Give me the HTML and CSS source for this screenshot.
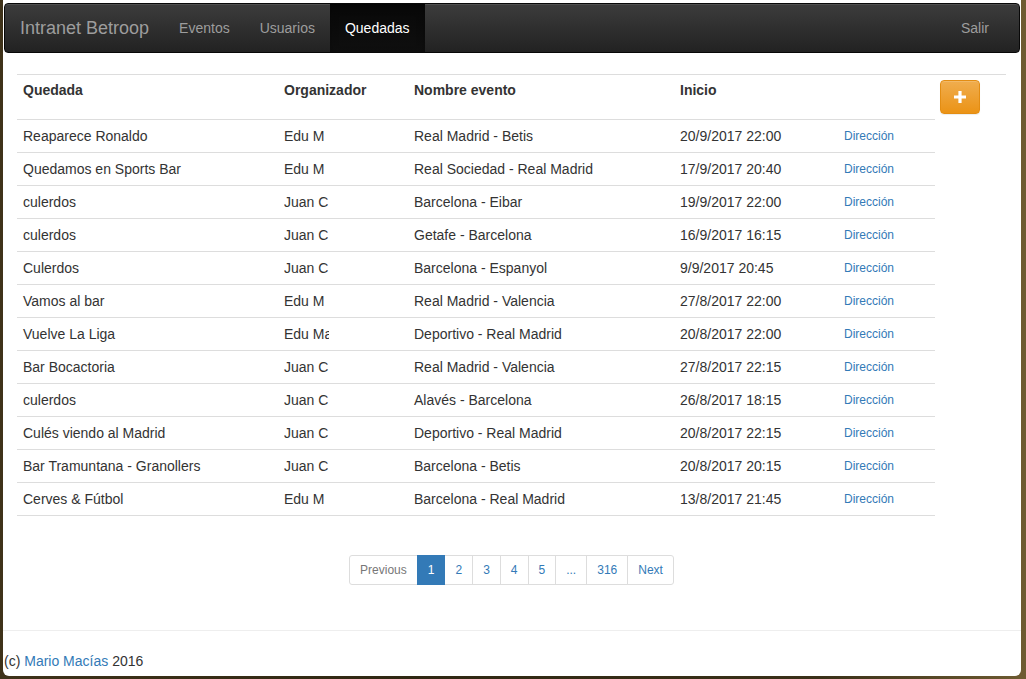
FILE: index.html
```html
<!DOCTYPE html>
<html lang="es">
<head>
<meta charset="utf-8">
<title>Intranet Betroop</title>
<link rel="stylesheet" href="styles.css">
</head>
<body>
<div class="window">
  <nav class="navbar">
    <a class="brand" href="#">Intranet Betroop</a>
    <ul class="nav">
      <li><a href="#">Eventos</a></li>
      <li><a href="#">Usuarios</a></li>
      <li class="active"><a href="#">Quedadas</a></li>
    </ul>
    <ul class="nav nav-right">
      <li><a href="#">Salir</a></li>
    </ul>
  </nav>

  <main class="container">
    <table class="table">
      <colgroup>
        <col class="c1"><col class="c2"><col class="c3"><col class="c4"><col class="c5"><col class="c6">
      </colgroup>
      <thead>
        <tr>
          <th>Quedada</th>
          <th>Organizador</th>
          <th>Nombre evento</th>
          <th>Inicio</th>
          <th></th>
          <th class="action">
            <button class="btn-add" type="button" aria-label="Añadir">
              <svg width="14" height="14" viewBox="0 0 14 14"><path d="M5.4 1h3.2v4.4H13v3.2H8.6V13H5.4V8.6H1V5.4h4.4z" fill="#fff"/></svg>
            </button>
          </th>
        </tr>
      </thead>
      <tbody>
        <tr><td>Reaparece Ronaldo</td><td><span class="clip">Edu M</span></td><td>Real Madrid - Betis</td><td>20/9/2017 22:00</td><td><a class="link" href="#">Dirección</a></td><td class="empty"></td></tr>
        <tr><td>Quedamos en Sports Bar</td><td><span class="clip">Edu M</span></td><td>Real Sociedad - Real Madrid</td><td>17/9/2017 20:40</td><td><a class="link" href="#">Dirección</a></td><td class="empty"></td></tr>
        <tr><td>culerdos</td><td><span class="clip">Juan C</span></td><td>Barcelona - Eibar</td><td>19/9/2017 22:00</td><td><a class="link" href="#">Dirección</a></td><td class="empty"></td></tr>
        <tr><td>culerdos</td><td><span class="clip">Juan C</span></td><td>Getafe - Barcelona</td><td>16/9/2017 16:15</td><td><a class="link" href="#">Dirección</a></td><td class="empty"></td></tr>
        <tr><td>Culerdos</td><td><span class="clip">Juan C</span></td><td>Barcelona - Espanyol</td><td>9/9/2017 20:45</td><td><a class="link" href="#">Dirección</a></td><td class="empty"></td></tr>
        <tr><td>Vamos al bar</td><td><span class="clip">Edu M</span></td><td>Real Madrid - Valencia</td><td>27/8/2017 22:00</td><td><a class="link" href="#">Dirección</a></td><td class="empty"></td></tr>
        <tr><td>Vuelve La Liga</td><td><span class="clip">Edu Macías</span></td><td>Deportivo - Real Madrid</td><td>20/8/2017 22:00</td><td><a class="link" href="#">Dirección</a></td><td class="empty"></td></tr>
        <tr><td>Bar Bocactoria</td><td><span class="clip">Juan C</span></td><td>Real Madrid - Valencia</td><td>27/8/2017 22:15</td><td><a class="link" href="#">Dirección</a></td><td class="empty"></td></tr>
        <tr><td>culerdos</td><td><span class="clip">Juan C</span></td><td>Alavés - Barcelona</td><td>26/8/2017 18:15</td><td><a class="link" href="#">Dirección</a></td><td class="empty"></td></tr>
        <tr><td>Culés viendo al Madrid</td><td><span class="clip">Juan C</span></td><td>Deportivo - Real Madrid</td><td>20/8/2017 22:15</td><td><a class="link" href="#">Dirección</a></td><td class="empty"></td></tr>
        <tr><td>Bar Tramuntana - Granollers</td><td><span class="clip">Juan C</span></td><td>Barcelona - Betis</td><td>20/8/2017 20:15</td><td><a class="link" href="#">Dirección</a></td><td class="empty"></td></tr>
        <tr><td>Cerves &amp; Fútbol</td><td><span class="clip">Edu M</span></td><td>Barcelona - Real Madrid</td><td>13/8/2017 21:45</td><td><a class="link" href="#">Dirección</a></td><td class="empty"></td></tr>
      </tbody>
    </table>

    <div class="pager-wrap">
      <ul class="pagination">
        <li class="disabled"><span>Previous</span></li>
        <li class="active"><span>1</span></li>
        <li><a href="#">2</a></li>
        <li><a href="#">3</a></li>
        <li><a href="#">4</a></li>
        <li><a href="#">5</a></li>
        <li><a href="#">...</a></li>
        <li><a href="#">316</a></li>
        <li><a href="#">Next</a></li>
      </ul>
    </div>
  </main>

  <footer class="footer">
    <hr class="rule">
    <p class="copy">(c) <a href="#">Mario Macías</a> 2016</p>
  </footer>
</div>
</body>
</html>
```

FILE: styles.css
```css
* { box-sizing: border-box; }

html, body {
  margin: 0;
  padding: 0;
}

body {
  width: 1026px;
  height: 679px;
  overflow: hidden;
  background: linear-gradient(90deg, #3f3219 0%, #2f2712 40%, #3a3018 80%, #6e5b31 100%);
  font-family: "Liberation Sans", Arial, Helvetica, sans-serif;
  font-size: 14px;
  line-height: 20px;
  color: #333;
}

a { text-decoration: none; }

.window {
  margin-left: 3px;
  width: 1018px;
  height: 676px;
  background: #fff;
  border-radius: 0 0 6px 6px;
  padding-top: 3px;
  display: flex;
  flex-direction: column;
}

/* Navbar */
.navbar {
  margin: 0 1px;
  height: 50px;
  flex: none;
  display: flex;
  align-items: stretch;
  background: linear-gradient(to bottom, #3c3c3c 0%, #222 100%);
  border: 1px solid #080808;
  border-radius: 4px;
  padding-right: 15px;
  box-shadow: inset 0 1px 0 rgba(255,255,255,.1);
}

.brand {
  padding: 0 15px;
  font-size: 18px;
  line-height: 48px;
  color: #9d9d9d;
}

.nav {
  list-style: none;
  margin: 0;
  padding: 0;
  display: flex;
}

.nav li a {
  display: block;
  padding: 0 15px;
  line-height: 48px;
  color: #9d9d9d;
}

.nav li.active a {
  color: #fff;
  background: linear-gradient(to bottom, #080808 0%, #0f0f0f 100%);
  box-shadow: inset 0 3px 9px rgba(0,0,0,.25);
}

.nav-right {
  margin-left: auto;
}

/* Content */
.container {
  padding: 0 15px 0 14px;
  margin-top: 21px;
}

.table {
  width: 989px;
  table-layout: fixed;
  border-collapse: separate;
  border-spacing: 0;
  border-top: 1px solid #ddd;
}

.c1 { width: 261px; }
.c2 { width: 130px; }
.c3 { width: 266px; }
.c4 { width: 164px; }
.c5 { width: 97px; }
.c6 { width: 71px; }

.table th {
  text-align: left;
  font-weight: bold;
  vertical-align: top;
  padding: 5px 6px;
  border-bottom: 1px solid #ddd;
  white-space: nowrap;
  line-height: 20px;
}

.table th.action {
  border-bottom: 0;
  padding: 5px 0 6px 5px;
}

.table td {
  height: 33px;
  padding: 6px;
  border-bottom: 1px solid #ddd;
  white-space: nowrap;
  vertical-align: top;
  line-height: 20px;
}

.table td.empty {
  border-bottom: 0;
}

.clip {
  display: inline-block;
  width: 45px;
  height: 20px;
  overflow: hidden;
  white-space: nowrap;
  vertical-align: top;
}

.link {
  display: inline-block;
  vertical-align: top;
  font-size: 12px;
  line-height: 20px;
  color: #337ab7;
}

.btn-add {
  width: 40px;
  height: 34px;
  display: flex;
  align-items: center;
  justify-content: center;
  padding: 0;
  border: 1px solid #e38d13;
  border-radius: 4px;
  background: linear-gradient(to bottom, #f0ad4e 0%, #eb9316 100%);
  box-shadow: inset 0 1px 0 rgba(255,255,255,.15), 0 1px 1px rgba(0,0,0,.075);
  cursor: pointer;
}

/* Pagination */
.pager-wrap {
  margin-top: 39px;
  display: flex;
  justify-content: center;
}

.pagination {
  list-style: none;
  margin: 0;
  padding: 0;
  display: flex;
  font-size: 12px;
  line-height: 18px;
}

.pagination li a,
.pagination li span {
  display: block;
  padding: 5px 10px;
  border: 1px solid #ddd;
  margin-left: -1px;
  color: #337ab7;
  background: #fff;
}

.pagination li:first-child span {
  margin-left: 0;
  border-radius: 3px 0 0 3px;
}

.pagination li:last-child a {
  border-radius: 0 3px 3px 0;
}

.pagination li.disabled span {
  color: #777;
}

.pagination li.active span {
  color: #fff;
  background: #337ab7;
  border-color: #337ab7;
  position: relative;
}

/* Footer */
.footer {
  margin-top: 45px;
}

.rule {
  margin: 0;
  border: 0;
  border-top: 1px solid #eee;
}

.copy {
  margin: 20px 0 0 1px;
}

.copy a {
  color: #337ab7;
}
```
